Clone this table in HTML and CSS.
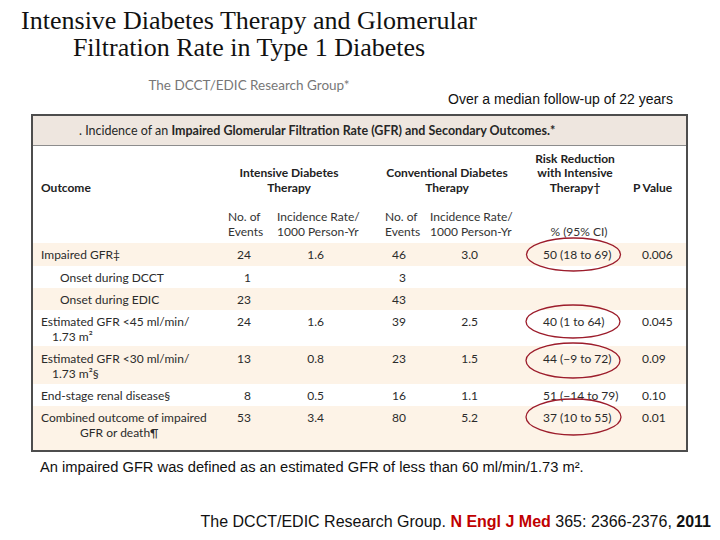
FILE: index.html
```html
<!DOCTYPE html>
<html lang="en">
<head>
<meta charset="utf-8">
<title>Intensive Diabetes Therapy and GFR</title>
<link rel="stylesheet" href="styles.css">
</head>
<body>
<div class="page">
  <header class="title-block">
    <h1 class="title">Intensive Diabetes Therapy and Glomerular<br>Filtration Rate in Type 1 Diabetes</h1>
    <p class="byline">The DCCT/EDIC Research Group*</p>
  </header>
  <p class="followup">Over a median follow-up of 22 years</p>

  <div class="table-box">
    <div class="caption"><span class="cap-light">. Incidence of an </span>Impaired Glomerular Filtration Rate (GFR) and Secondary Outcomes.*</div>
    <table class="data">
      <colgroup>
        <col class="c1"><col class="c2"><col class="c3"><col class="c4"><col class="c5"><col class="c6"><col class="c7">
      </colgroup>
      <thead>
        <tr class="head-a">
          <th class="outcome">Outcome</th>
          <th class="grp grp-int" colspan="2">Intensive Diabetes<br>Therapy</th>
          <th class="grp grp-conv" colspan="2">Conventional Diabetes<br>Therapy</th>
          <th class="grp grp-rr">Risk Reduction<br>with Intensive<br>Therapy†</th>
          <th class="grp grp-p">P Value</th>
        </tr>
        <tr class="head-b">
          <th></th>
          <th class="sub sub-ev1">No. of<br>Events</th>
          <th class="sub sub-rt1">Incidence Rate/<br>1000 Person-Yr</th>
          <th class="sub sub-ev2">No. of<br>Events</th>
          <th class="sub sub-rt2">Incidence Rate/<br>1000 Person-Yr</th>
          <th class="sub sub-ci">% (95% CI)</th>
          <th></th>
        </tr>
      </thead>
      <tbody>
        <tr class="shade h23">
          <td class="label">Impaired GFR‡</td>
          <td class="ev1">24</td><td class="rt1">1.6</td><td class="ev2">46</td><td class="rt2">3.0</td><td class="ci">50 (18 to 69)</td><td class="pv">0.006</td>
        </tr>
        <tr class="h22">
          <td class="label indent">Onset during DCCT</td>
          <td class="ev1">1</td><td class="rt1"></td><td class="ev2">3</td><td class="rt2"></td><td class="ci"></td><td class="pv"></td>
        </tr>
        <tr class="shade h22">
          <td class="label indent">Onset during EDIC</td>
          <td class="ev1">23</td><td class="rt1"></td><td class="ev2">43</td><td class="rt2"></td><td class="ci"></td><td class="pv"></td>
        </tr>
        <tr class="h36">
          <td class="label">Estimated GFR &lt;45 ml/min/<span class="cont c-short">1.73 m²</span></td>
          <td class="ev1">24</td><td class="rt1">1.6</td><td class="ev2">39</td><td class="rt2">2.5</td><td class="ci">40 (1 to 64)</td><td class="pv">0.045</td>
        </tr>
        <tr class="shade h38">
          <td class="label">Estimated GFR &lt;30 ml/min/<span class="cont c-short">1.73 m²§</span></td>
          <td class="ev1">13</td><td class="rt1">0.8</td><td class="ev2">23</td><td class="rt2">1.5</td><td class="ci">44 (−9 to 72)</td><td class="pv">0.09</td>
        </tr>
        <tr class="h22">
          <td class="label">End-stage renal disease§</td>
          <td class="ev1">8</td><td class="rt1">0.5</td><td class="ev2">16</td><td class="rt2">1.1</td><td class="ci">51 (−14 to 79)</td><td class="pv">0.10</td>
        </tr>
        <tr class="shade h44">
          <td class="label">Combined outcome of impaired<span class="cont c-long">GFR or death¶</span></td>
          <td class="ev1">53</td><td class="rt1">3.4</td><td class="ev2">80</td><td class="rt2">5.2</td><td class="ci">37 (10 to 55)</td><td class="pv">0.01</td>
        </tr>
      </tbody>
    </table>
    <svg class="marks" width="657" height="338" viewBox="0 0 657 338" aria-hidden="true">
      <ellipse cx="542.5" cy="140.5" rx="47" ry="16.5"/>
      <ellipse cx="542" cy="207.5" rx="47" ry="16.5"/>
      <ellipse cx="542" cy="246.5" rx="47" ry="17.5"/>
      <ellipse cx="542.5" cy="303" rx="47.5" ry="18"/>
    </svg>
  </div>

  <p class="note">An impaired GFR was defined as an estimated GFR of less than 60 ml/min/1.73 m².</p>
  <p class="cite">The DCCT/EDIC Research Group. <span class="journal">N Engl J Med</span> 365: 2366-2376, <b>2011</b></p>
</div>
</body>
</html>
```

FILE: styles.css
```css
* { box-sizing: border-box; }

html, body {
  margin: 0;
  padding: 0;
  background: #ffffff;
}

.page {
  width: 720px;
  height: 540px;
  overflow: hidden;
  font-family: "Liberation Sans", Arial, sans-serif;
  color: #000;
}

.title-block {
  width: 456px;
  margin-left: 21px;
  padding-top: 7px;
  text-align: center;
}

.title {
  margin: 0;
  font-family: "Liberation Serif", "Times New Roman", serif;
  font-weight: normal;
  font-size: 26px;
  line-height: 27px;
  color: #111;
}

.byline {
  margin: 17px 0 0 0;
  font-family: Lato, "Open Sans", sans-serif;
  font-size: 13.5px;
  line-height: 14px;
  color: #777;
}

.followup {
  margin: 0;
  padding-right: 47px;
  text-align: right;
  font-size: 14px;
  line-height: 15px;
  color: #111;
}

.table-box {
  position: relative;
  width: 657px;
  margin: 7px 0 0 31px;
  border: 2px solid #4d4d4d;
  font-family: Lato, "Open Sans", sans-serif;
  font-size: 12px;
  color: #2b2b2b;
}

.caption {
  height: 30px;
  line-height: 29px;
  padding-left: 46px;
  background: #eee6df;
  border-bottom: 1px solid #8c8c8c;
  font-size: 12.5px;
  font-weight: bold;
  color: #262626;
  white-space: nowrap;
}

.cap-light { font-weight: normal; }

.data {
  width: 653px;
  border-collapse: collapse;
  table-layout: fixed;
}

.c1 { width: 193px; }
.c2 { width: 42px; }
.c3 { width: 104px; }
.c4 { width: 54px; }
.c5 { width: 96px; }
.c6 { width: 106px; }
.c7 { width: 58px; }

.data th,
.data td {
  padding: 0;
  font-weight: normal;
  white-space: nowrap;
}

.data .head-a th {
  height: 53px;
  vertical-align: bottom;
  line-height: 14.5px;
  padding-bottom: 4px;
  font-weight: bold;
  color: #222;
  text-align: center;
}

.data .head-a .outcome {
  text-align: left;
  padding-left: 8px;
}

.data .head-a .grp-int { padding-right: 20px; }
.data .head-a .grp-rr { padding-left: 0; }
.data .head-a .grp-p { text-align: left; padding-left: 5px; }

.data .head-b th {
  height: 44px;
  vertical-align: bottom;
  line-height: 15px;
  padding-bottom: 4px;
  text-align: left;
  color: #333;
}

.data .head-b .sub-ev1 { padding-left: 2px; }
.data .head-b .sub-rt1 { padding-left: 9px; }
.data .head-b .sub-ev2 { padding-left: 13px; }
.data .head-b .sub-rt2 { padding-left: 4px; }
.data .head-b .sub-ci { text-align: center; padding-left: 8px; }

.data tbody td {
  vertical-align: top;
  line-height: 15px;
  padding-top: 4px;
}

.data .shade td { background: #fdf3e7; }

.data .h23 td { height: 23px; }
.data .h22 td { height: 22px; }
.data .h36 td { height: 36px; }
.data .h38 td { height: 38px; padding-top: 4.5px; }
.data .h44 td { height: 44px; }

.data td.label {
  padding-left: 8px;
  text-align: left;
}

.data td.label.indent { padding-left: 27px; }

.cont { display: block; }
.c-short { padding-left: 11px; }
.c-long { padding-left: 39px; }

.data td.ev1 { text-align: right; padding-right: 17px; }
.data td.rt1 { text-align: right; padding-right: 48px; }
.data td.ev2 { text-align: right; padding-right: 20px; }
.data td.rt2 { text-align: right; padding-right: 44px; }
.data td.ci { text-align: left; padding-left: 21px; }
.data td.pv { text-align: left; padding-left: 14px; }

.marks {
  position: absolute;
  left: -2px;
  top: -2px;
  pointer-events: none;
}

.marks ellipse {
  fill: none;
  stroke: #9c1c2b;
  stroke-width: 1.3;
}

.note {
  margin: 8px 0 0 40px;
  font-size: 14.7px;
  line-height: 15px;
  color: #111;
}

.cite {
  margin: 38px 0 0 0;
  padding-right: 9px;
  text-align: right;
  font-size: 16px;
  line-height: 18px;
  color: #111;
}

.journal {
  color: #c00000;
  font-weight: bold;
}

.cite b { font-weight: bold; }
```
